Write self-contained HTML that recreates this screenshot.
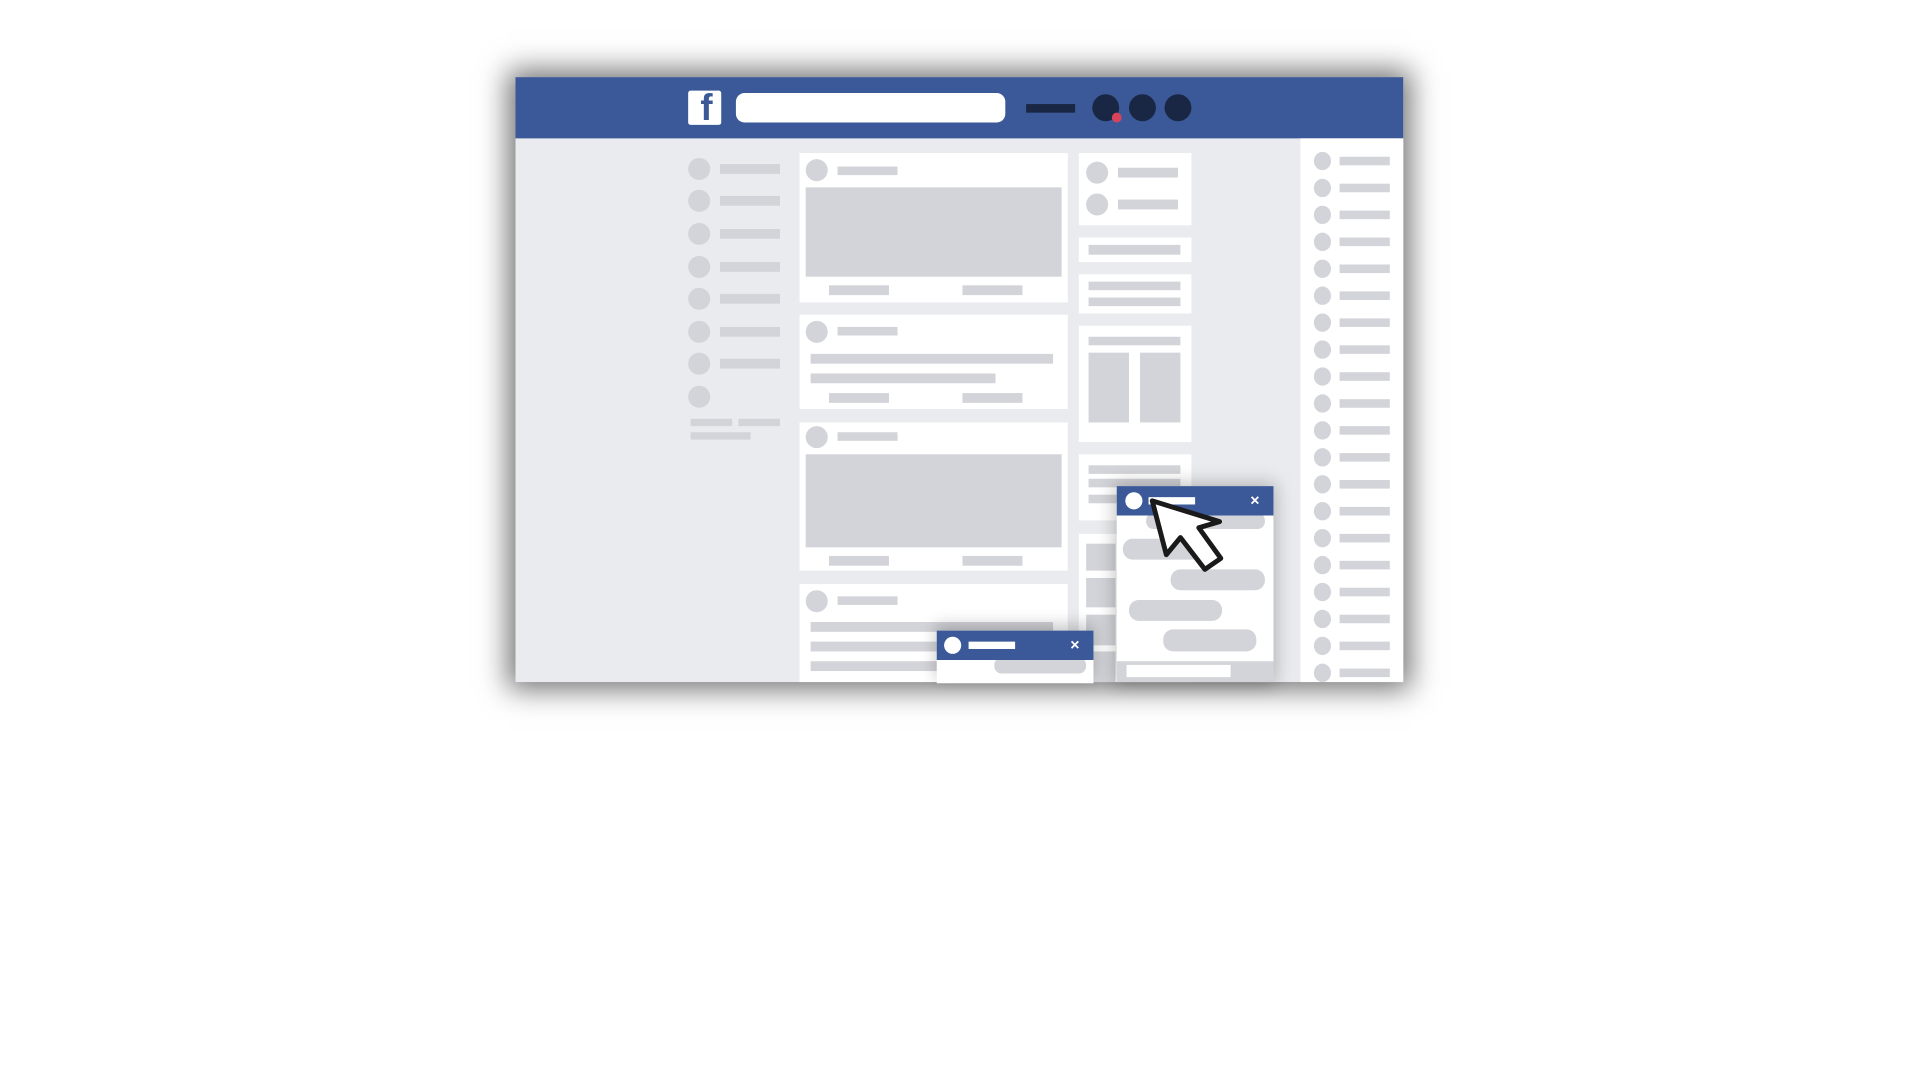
<!DOCTYPE html>
<html><head><meta charset="utf-8"><style>
html,body{margin:0;padding:0;background:#fff;width:1920px;height:1080px;overflow:hidden}
#s{position:absolute;left:0;top:0;width:1568px;height:882px;transform:scale(1.22449);transform-origin:0 0}
.a{position:absolute}
.w{position:absolute;background:#fff}
.g{position:absolute;background:#d3d4d9}
.c{position:absolute;background:#d3d4d9;border-radius:50%}
</style></head><body><div id="s">
<div class="a" style="left:421px;top:63px;width:725px;height:494px;background:#e9ebee;box-shadow:0 0 22px 6px rgba(0,0,0,.55);overflow:hidden">
</div>
<div class="a" style="left:421px;top:63px;width:725px;height:50px;background:#3b5998"></div>
<div class="a" style="left:562px;top:74px;width:27px;height:28px;background:#fff;border-radius:2px;overflow:hidden"><span style="position:absolute;left:10px;top:-2px;font:bold 30px 'Liberation Sans',sans-serif;color:#3b5998">f</span></div>
<div class="w" style="left:601px;top:76px;width:220px;height:24px;border-radius:7px"></div>
<div class="a" style="left:838px;top:85px;width:40px;height:7px;background:#1a2744"></div>
<div class="a" style="left:892px;top:77px;width:22px;height:22px;border-radius:50%;background:#1a2744"></div>
<div class="a" style="left:922px;top:77px;width:22px;height:22px;border-radius:50%;background:#1a2744"></div>
<div class="a" style="left:951px;top:77px;width:22px;height:22px;border-radius:50%;background:#1a2744"></div>
<div class="a" style="left:908px;top:92px;width:8px;height:8px;border-radius:50%;background:#d9435a"></div>

<div class="c" style="left:562px;top:129px;width:18px;height:18px"></div><div class="g" style="left:588px;top:134px;width:49px;height:8px"></div>
<div class="c" style="left:562px;top:155px;width:18px;height:18px"></div><div class="g" style="left:588px;top:160px;width:49px;height:8px"></div>
<div class="c" style="left:562px;top:182px;width:18px;height:18px"></div><div class="g" style="left:588px;top:187px;width:49px;height:8px"></div>
<div class="c" style="left:562px;top:209px;width:18px;height:18px"></div><div class="g" style="left:588px;top:214px;width:49px;height:8px"></div>
<div class="c" style="left:562px;top:235px;width:18px;height:18px"></div><div class="g" style="left:588px;top:240px;width:49px;height:8px"></div>
<div class="c" style="left:562px;top:262px;width:18px;height:18px"></div><div class="g" style="left:588px;top:267px;width:49px;height:8px"></div>
<div class="c" style="left:562px;top:288px;width:18px;height:18px"></div><div class="g" style="left:588px;top:293px;width:49px;height:8px"></div>
<div class="c" style="left:562px;top:315px;width:18px;height:18px"></div>
<div class="g" style="left:564px;top:342px;width:34px;height:6px"></div><div class="g" style="left:603px;top:342px;width:34px;height:6px"></div>
<div class="g" style="left:564px;top:353px;width:49px;height:6px"></div>

<div class="w" style="left:653px;top:125px;width:219px;height:122px"></div>
<div class="c" style="left:658px;top:130px;width:18px;height:18px"></div><div class="g" style="left:684px;top:136px;width:49px;height:7px"></div>
<div class="g" style="left:658px;top:153px;width:209px;height:73px"></div>
<div class="g" style="left:677px;top:233px;width:49px;height:8px"></div><div class="g" style="left:786px;top:233px;width:49px;height:8px"></div>

<div class="w" style="left:653px;top:257px;width:219px;height:77px"></div>
<div class="c" style="left:658px;top:262px;width:18px;height:18px"></div><div class="g" style="left:684px;top:267px;width:49px;height:7px"></div>
<div class="g" style="left:662px;top:289px;width:198px;height:8px"></div><div class="g" style="left:662px;top:305px;width:151px;height:8px"></div>
<div class="g" style="left:677px;top:321px;width:49px;height:8px"></div><div class="g" style="left:786px;top:321px;width:49px;height:8px"></div>

<div class="w" style="left:653px;top:345px;width:219px;height:121px"></div>
<div class="c" style="left:658px;top:348px;width:18px;height:18px"></div><div class="g" style="left:684px;top:353px;width:49px;height:7px"></div>
<div class="g" style="left:658px;top:371px;width:209px;height:76px"></div>
<div class="g" style="left:677px;top:454px;width:49px;height:8px"></div><div class="g" style="left:786px;top:454px;width:49px;height:8px"></div>

<div class="w" style="left:653px;top:477px;width:219px;height:80px"></div>
<div class="c" style="left:658px;top:482px;width:18px;height:18px"></div><div class="g" style="left:684px;top:487px;width:49px;height:7px"></div>
<div class="g" style="left:662px;top:508px;width:198px;height:8px"></div><div class="g" style="left:662px;top:524px;width:198px;height:8px"></div><div class="g" style="left:662px;top:540px;width:198px;height:8px"></div>

<div class="w" style="left:881px;top:125px;width:92px;height:59px"></div>
<div class="c" style="left:887px;top:132px;width:18px;height:18px"></div><div class="g" style="left:913px;top:137px;width:49px;height:8px"></div>
<div class="c" style="left:887px;top:158px;width:18px;height:18px"></div><div class="g" style="left:913px;top:163px;width:49px;height:8px"></div>
<div class="w" style="left:881px;top:194px;width:92px;height:20px"></div><div class="g" style="left:889px;top:200px;width:75px;height:8px"></div>
<div class="w" style="left:881px;top:224px;width:92px;height:32px"></div><div class="g" style="left:889px;top:230px;width:75px;height:7px"></div><div class="g" style="left:889px;top:243px;width:75px;height:7px"></div>
<div class="w" style="left:881px;top:266px;width:92px;height:95px"></div><div class="g" style="left:889px;top:275px;width:75px;height:7px"></div>
<div class="g" style="left:889px;top:288px;width:33px;height:57px"></div><div class="g" style="left:931px;top:288px;width:33px;height:57px"></div>
<div class="w" style="left:881px;top:371px;width:92px;height:54px"></div>
<div class="g" style="left:889px;top:380px;width:75px;height:7px"></div><div class="g" style="left:889px;top:391px;width:75px;height:7px"></div><div class="g" style="left:889px;top:404px;width:75px;height:7px"></div>
<div class="w" style="left:881px;top:436px;width:92px;height:121px"></div>
<div class="g" style="left:887px;top:444px;width:24px;height:22px"></div><div class="g" style="left:887px;top:472px;width:24px;height:24px"></div><div class="g" style="left:887px;top:502px;width:24px;height:25px"></div><div class="g" style="left:887px;top:532px;width:24px;height:25px"></div>

<div class="w" style="left:1062px;top:113px;width:84px;height:444px"></div>
<div id="sb"></div>

<div class="w" style="left:912px;top:397px;width:128px;height:160px;box-shadow:0 0 14px 2px rgba(0,0,0,.25)"></div>
<div class="g" style="left:936px;top:419px;width:97px;height:13px;border-radius:6px"></div>
<div class="g" style="left:917px;top:440px;width:72px;height:17px;border-radius:8px"></div>
<div class="g" style="left:956px;top:465px;width:77px;height:17px;border-radius:8px"></div>
<div class="g" style="left:922px;top:490px;width:76px;height:17px;border-radius:8px"></div>
<div class="g" style="left:950px;top:514px;width:76px;height:18px;border-radius:8px"></div>
<div class="g" style="left:912px;top:540px;width:128px;height:17px"></div>
<div class="w" style="left:920px;top:543px;width:85px;height:10px"></div>
<div class="a" style="left:912px;top:397px;width:128px;height:24px;background:#3b5998"></div>
<div class="w" style="left:919px;top:402px;width:14px;height:14px;border-radius:50%"></div>
<div class="w" style="left:938px;top:406px;width:38px;height:6px"></div>
<div class="a" style="left:1021px;top:401px;color:#fff;font:bold 13px 'Liberation Sans',sans-serif">×</div>

<div class="w" style="left:765px;top:515px;width:128px;height:43px;box-shadow:0 -4px 12px 1px rgba(0,0,0,.22)"></div>
<div class="g" style="left:812px;top:537px;width:75px;height:13px;border-radius:6px"></div>
<div class="a" style="left:765px;top:515px;width:128px;height:24px;background:#3b5998"></div>
<div class="w" style="left:771px;top:520px;width:14px;height:14px;border-radius:50%"></div>
<div class="w" style="left:791px;top:524px;width:38px;height:6px"></div>
<div class="a" style="left:874px;top:519px;color:#fff;font:bold 13px 'Liberation Sans',sans-serif">×</div>

<svg class="a" style="left:930px;top:400px" width="80" height="80" viewBox="0 0 80 80">
<path d="M11 9 L22.5 53 L34 39 L54 65 L67 56 L49 31 L66 26 Z" fill="#fff" stroke="#1a1a1a" stroke-width="4" stroke-linejoin="round"/>
</svg>
</div>
<script>
var h='';for(var i=0;i<20;i++){var y=131+i*22;h+='<div class="c" style="left:1073px;top:'+(y-7)+'px;width:14px;height:15px"></div><div class="g" style="left:1094px;top:'+(y-3)+'px;width:41px;height:7px"></div>';}
document.getElementById('sb').outerHTML=h;
</script>
</body></html>
